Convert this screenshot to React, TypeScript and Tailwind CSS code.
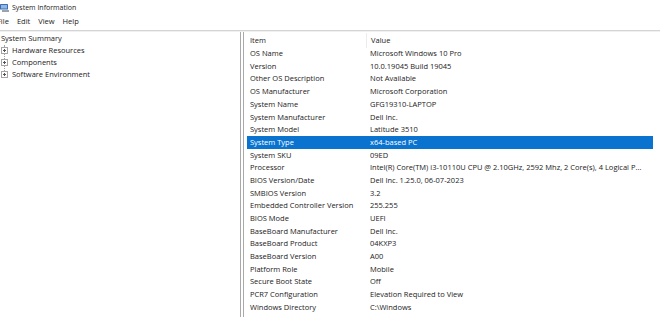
import { Fragment } from 'react';

interface InfoRow {
  item: string;
  value: string;
  selected?: boolean;
}

const rows: InfoRow[] = [
  { item: 'OS Name', value: 'Microsoft Windows 10 Pro' },
  { item: 'Version', value: '10.0.19045 Build 19045' },
  { item: 'Other OS Description', value: 'Not Available' },
  { item: 'OS Manufacturer', value: 'Microsoft Corporation' },
  { item: 'System Name', value: 'GFG19310-LAPTOP' },
  { item: 'System Manufacturer', value: 'Dell Inc.' },
  { item: 'System Model', value: 'Latitude 3510' },
  { item: 'System Type', value: 'x64-based PC', selected: true },
  { item: 'System SKU', value: '09ED' },
  {
    item: 'Processor',
    value:
      'Intel(R) Core(TM) i3-10110U CPU @ 2.10GHz, 2592 Mhz, 2 Core(s), 4 Logical P...',
  },
  { item: 'BIOS Version/Date', value: 'Dell Inc. 1.25.0, 06-07-2023' },
  { item: 'SMBIOS Version', value: '3.2' },
  { item: 'Embedded Controller Version', value: '255.255' },
  { item: 'BIOS Mode', value: 'UEFI' },
  { item: 'BaseBoard Manufacturer', value: 'Dell Inc.' },
  { item: 'BaseBoard Product', value: '04KXP3' },
  { item: 'BaseBoard Version', value: 'A00' },
  { item: 'Platform Role', value: 'Mobile' },
  { item: 'Secure Boot State', value: 'Off' },
  { item: 'PCR7 Configuration', value: 'Elevation Required to View' },
  { item: 'Windows Directory', value: 'C:\\Windows' },
  { item: 'System Directory', value: 'C:\\Windows\\system32' },
];

const treeChildren = ['Hardware Resources', 'Components', 'Software Environment'];

function PlusBox() {
  return (
    <svg width="7" height="7" viewBox="0 0 7 7" className="shrink-0">
      <rect x="0.5" y="0.5" width="6" height="6" fill="#fff" stroke="#a5a5a5" />
      <path d="M2 3.5h3M3.5 2v3" stroke="#555" strokeWidth="1" />
    </svg>
  );
}

function AppIcon() {
  return (
    <svg width="10" height="8" viewBox="0 0 10 8">
      <rect x="0" y="0" width="8" height="5.5" rx="0.5" fill="#3d6fb0" />
      <rect x="1" y="1" width="6" height="3.5" fill="#8fb7e6" />
      <rect x="2" y="6" width="7" height="2" fill="#9aa3ad" />
    </svg>
  );
}

export default function App() {
  return (
    <div
      className="w-[660px] h-[317px] overflow-hidden bg-white text-[#222] text-[7.5px] leading-none"
      style={{ fontFamily: '"Open Sans", "Noto Sans", sans-serif' }}
    >
      {/* title bar */}
      <div className="h-[14px] flex items-center gap-[2px] pt-[1px]">
        <AppIcon />
        <span className="text-[7px]">System Information</span>
      </div>

      {/* menu */}
      <div className="h-[16px] flex items-center gap-[8px] -ml-[3px]">
        <span>File</span>
        <span>Edit</span>
        <span>View</span>
        <span>Help</span>
      </div>

      <div className="h-[2px] border-t border-[#d4d4d4] bg-[#f0f0f0]" />

      <div className="flex h-full">
        {/* tree pane */}
        <div className="w-[241px] shrink-0 border-r border-[#a9a9a9] pt-[1px]">
          <div className="h-[12px] flex items-center pl-[1px]">System Summary</div>
          <div className="relative">
            <div className="absolute left-[4px] top-0 h-[30px] border-l border-dotted border-[#a0a0a0]" />
            {treeChildren.map((label) => (
              <div key={label} className="relative h-[11.8px] flex items-center gap-[4px] pl-[1px]">
                <PlusBox />
                <span>{label}</span>
              </div>
            ))}
          </div>
        </div>

        {/* list pane */}
        <div className="flex-1 ml-[2px] border-l border-[#a9a9a9] pl-[3px] pt-[1px]">
          <div className="h-[14.5px] grid grid-cols-[119px_287px] items-center">
            <div className="pl-[3px] h-full flex items-center">Item</div>
            <div className="pl-[4px] h-full flex items-center border-l border-[#ececec]">
              Value
            </div>
          </div>
          <div className="grid grid-cols-[119px_287px] auto-rows-[12.7px]">
            {rows.map((r) => (
              <Fragment key={r.item}>
                <div
                  className={`pl-[3px] flex items-center whitespace-nowrap ${
                    r.selected ? 'bg-[#0a73cf] text-white' : ''
                  }`}
                >
                  {r.item}
                </div>
                <div
                  className={`pl-[4px] flex items-center whitespace-nowrap overflow-hidden ${
                    r.selected ? 'bg-[#0a73cf] text-white' : ''
                  }`}
                >
                  {r.value}
                </div>
              </Fragment>
            ))}
          </div>
        </div>
      </div>
    </div>
  );
}
